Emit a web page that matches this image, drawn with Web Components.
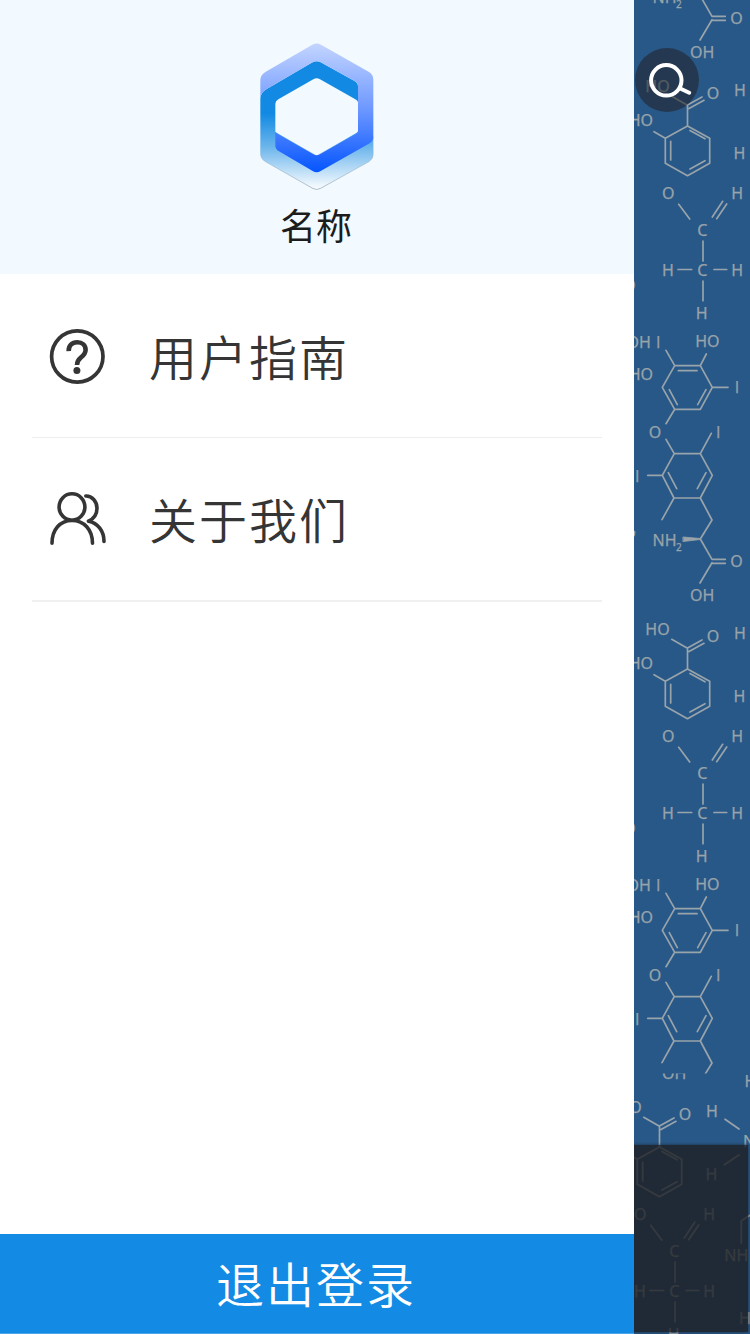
<!DOCTYPE html>
<html lang="zh-CN">
<head>
<meta charset="utf-8">
<title>名称</title>
<style>
html,body{margin:0;padding:0;height:100%;overflow:hidden;background:#fff}
body{font-family:"Noto Sans CJK SC","Noto Sans",sans-serif;color:#353535}
</style>
</head>
<body>
<app-shell>
  <side-drawer slot="drawer">
    <brand-header slot="header">名称</brand-header>
    <menu-item icon="help">用户指南</menu-item>
    <menu-item icon="users" last>关于我们</menu-item>
    <logout-button slot="footer">退出登录</logout-button>
  </side-drawer>
  <molecule-backdrop slot="content"></molecule-backdrop>
</app-shell>
<script>
class Base extends HTMLElement{
  connectedCallback(){
    if(!this.shadowRoot) this.attachShadow({mode:'open'}).innerHTML=this.view();
  }
}
customElements.define('app-shell',class extends Base{view(){return `
<style>:host{display:grid;grid-template-columns:634px 1fr;height:1334px;width:750px;overflow:hidden}</style>
<slot name="drawer"></slot><slot name="content"></slot>`}});

customElements.define('side-drawer',class extends Base{view(){return `
<style>:host{display:flex;flex-direction:column;background:#fff;height:1334px}
nav{flex:1;padding:0 32px}</style>
<slot name="header"></slot><nav><slot></slot></nav><slot name="footer"></slot>`}});

customElements.define('brand-header',class extends Base{view(){return `
<style>:host{display:flex;flex-direction:column;align-items:center;box-sizing:border-box;height:274px;padding-top:42.7px;background:#f2f9ff;color:#1c1c1c;font-size:36px;line-height:52px}
svg{display:block;width:114px;height:147.67px;margin-bottom:7.3px;flex:none}
span{padding-right:2px}</style>
<svg viewBox="60 38 342 443">
<defs>
<linearGradient id="b" gradientUnits="userSpaceOnUse" x1="0" y1="250" x2="0" y2="480"><stop offset="0" stop-color="#128ae3"/><stop offset=".43" stop-color="#6bb5ec"/><stop offset="1" stop-color="#fff"/></linearGradient>
<linearGradient id="p" gradientUnits="userSpaceOnUse" x1="0" y1="38" x2="0" y2="426"><stop offset="0" stop-color="#c4d5ff"/><stop offset=".5" stop-color="#6f99ff"/><stop offset="1" stop-color="#0555ff"/></linearGradient>
<linearGradient id="e" gradientUnits="userSpaceOnUse" x1="0" y1="330" x2="0" y2="480"><stop offset="0" stop-color="#8299aa" stop-opacity="0"/><stop offset="1" stop-color="#8299aa"/></linearGradient>
</defs>
<path fill="url(#b)" stroke="url(#e)" stroke-width="2" fill-rule="evenodd" d="M61 205Q61 187 80 176L215 97Q230 89 245 97L345 153Q354 158 354 166L400 320V372Q400 386 387 394L242 474Q230 481 218 474L76 394Q61 385 61 370ZM354 216Q354 211 346 207L240 147Q230 141 220 147L115 207Q106 212 106 220V305L230 376L354 305Z"/>
<path fill="url(#p)" d="M61 205V150Q61 134 76 125L217 43Q230 36 243 43L387 125Q400 133 400 148V320Q400 332 389 339L242 422Q230 429 218 422L117 363Q106 356 106 346V303Q106 307 113 311L220 372Q230 378 240 372L347 311Q354 307 354 301V166Q354 158 345 153L245 97Q230 89 215 97L80 176Q61 187 61 205Z"/>
</svg><span><slot></slot></span>`}});

const icons={
help:`<g transform="translate(.3 1.5)"><circle cx="29" cy="28" r="25.7" stroke-width="3.7"/><path stroke-width="4.6" stroke-linecap="butt" d="M20.4 22.6C20.2 17 23.6 13.8 28.9 13.8S37.3 16.8 37.3 21.4C37.3 25 35 27 32.6 29C29.8 31.3 28.7 33.2 28.7 36.6"/><circle cx="28.6" cy="41.9" r="3.5" fill="#353535" stroke="none"/></g>`,
users:`<ellipse cx="24" cy="17" rx="12.9" ry="13.2"/><path d="M4 53.3C4 39.5 12 30.5 24 30.5S44.5 39.5 44.5 53.3M37.8 6C44 5.7 49 11.5 49 18.2C49 24 46.3 28.4 40.5 31.2C50 33 56 41 56 51.4"/>`
};
customElements.define('menu-item',class extends Base{view(){return `
<style>:host{display:flex;align-items:center;box-sizing:border-box;height:163.5px;padding:3px 0 0 16px;border-bottom:1px solid #eee;font-size:48px;letter-spacing:2px;line-height:70px;color:#353535;font-weight:350}
:host([last]){height:164.5px;border-bottom:2px solid #f0f0f0}
svg{width:60px;height:60px;margin-right:41px;flex:none}
span{padding-bottom:4px}</style>
<svg viewBox="0 0 60 60" fill="none" stroke="#353535" stroke-width="3.6" stroke-linecap="round" stroke-linejoin="round">${icons[this.getAttribute('icon')]}</svg>
<span><slot></slot></span>`}});

customElements.define('logout-button',class extends Base{view(){return `
<style>:host{display:flex;align-items:center;justify-content:center;box-sizing:border-box;height:100px;padding:0 2px 4px 0;background:#138ae4;border-bottom:1px solid #4aa5ea;color:#fff;font-size:48px;letter-spacing:2px;line-height:70px;font-weight:350}</style>
<span><slot></slot></span>`}});

/* Repeating wallpaper: one column of skeletal formulas */
const bonds=`M671.7 96.3L687.5 105.3V126M687.5 105L702 97M689 108.5L704 100.3
M687.5 126L709.7 138.3V163.3L687.5 175.7L665.3 163.3V138.3ZM690 130.5L705 138.8M670.7 141.3V160M690 169L705 160.7M654 131.7L665.3 138.3
M678.7 204.3L689.7 219M722.7 201.3L712.3 217M726.7 204L716.7 218.7M703 241V261M678 269.5H691.7M714 269.5H726.7M703 281V300.7
M666 350.3L674.7 365.7M706.3 354L700.3 365.7M674.7 365.7H700.3L712.3 387.3L700.3 409.3H674.7L662.3 387.3ZM678.3 370.7H697M669.3 389.7L677.3 404.7M706 389.7L697.7 404.7M712.3 387.3H728M674.7 409.3L666 423.7
M666 439.3L674.3 453.7M711.3 433.3L700.3 453.7M674.3 453.7H700.3L712.3 475.3L700.3 498H674L662.3 475.3ZM668.3 472.7L676.7 488.7M706 472.7L697.3 488.7M647.7 475.3H662.3M674 498L662 519.7
M700.3 498L712 520L700.3 539L712 559.3H725.3M712 563.3H725.3M712 562.7L700 583`;
const atoms=[['HO',645.3,92],['O',706.7,99],['H',734,96],['HO',628.7,126],['H',733.6,159.3],
['O',662,199],['H',731.3,199],['C',697.3,236],['H',662,276],['C',697.3,276],['H',731.3,276],['H',695.8,318.7],['O',623.3,291],
['OH',626.5,347.7],['I',656.1,348],['HO',695.2,347.3],['HO',628.7,379.5],['I',734.7,393],['O',648.7,438],['I',716.1,438],['I',635.1,481.7],
['NH',652.5,545.7],['2',676,550.5,10],['O',730.3,567.3],['OH',689.9,601]];
const label=([t,x,y,s])=>`<text x="${x}" y="${y}"${s?` font-size="${s}"`:''}${t==='I'?' class="i"':''}>${t}</text>`;
const tile=(dx,dy,lo,hi)=>`<g transform="translate(${dx} ${dy})"><path d="${bonds}"/><path class="w" d="M683.3 537L700.3 538.5V539.5L683.3 541.5Z"/>${atoms.filter(a=>a[2]+dy>lo&&a[2]-12+dy<hi&&a[1]+dx+24>634&&a[1]+dx<750).map(label).join('')}</g>`;
customElements.define('molecule-backdrop',class extends Base{view(){return `
<style>:host{display:block;position:relative;background:#285888;overflow:hidden;height:1334px}
svg{display:block}
.scene{width:116px;height:1334px}
.scene path{fill:none;stroke:#98a3aa;stroke-width:1.7;stroke-linecap:round;stroke-linejoin:round}
.scene path.w{fill:#98a3aa;stroke-width:.8}
.scene text{fill:#98a3aa;stroke:#98a3aa;stroke-width:.25;font-family:"Noto Sans",sans-serif}
.scene text.i{font-family:"Open Sans","Noto Sans",sans-serif}
.bar{position:absolute;left:-10px;right:2px;top:1145px;bottom:2px;background:rgba(30,31,35,.8);box-shadow:0 0 3px rgba(30,31,35,.8)}
search-button{position:absolute;left:.5px;top:47.5px}</style>
<svg class="scene" viewBox="634 0 116 1334" font-size="16">
<defs><clipPath id="u"><rect x="634" y="0" width="116" height="1073.5"/></clipPath><clipPath id="l"><rect x="634" y="1073.5" width="116" height="261"/></clipPath></defs>
<g clip-path="url(#u)">${tile(0,-543,0,1073)}${tile(0,0,0,1073)}${tile(0,543,0,1073)}<path d="M634.4 531.5Q634.8 534 634 535.5"/></g>
<g clip-path="url(#l)">${tile(-28,478,1073,1334)}${tile(-28,1021,1073,1334)}
<path d="M725 1119.3L739 1129M739 1155L724.3 1164.7M741.3 1243V1220.7L751 1214.7"/>
${[['H',744.5,1087],['N',743,1147.3],['NH',724.3,1260.7],['H',739,1324]].map(label).join('')}</g>
</svg><div class="bar"></div><search-button></search-button>`}});

customElements.define('search-button',class extends Base{view(){return `
<style>:host{display:block;width:64px;height:64px;border-radius:50%;background:rgba(34,34,38,.56)}svg{display:block}</style>
<svg width="64" height="64" viewBox="0 0 64 64" fill="none" stroke="#fff" stroke-width="4" stroke-linecap="round"><circle cx="31.3" cy="32.3" r="15.2"/><path d="M45.2 40.5L54.2 44.7"/></svg>`}});
</script>
</body>
</html>
